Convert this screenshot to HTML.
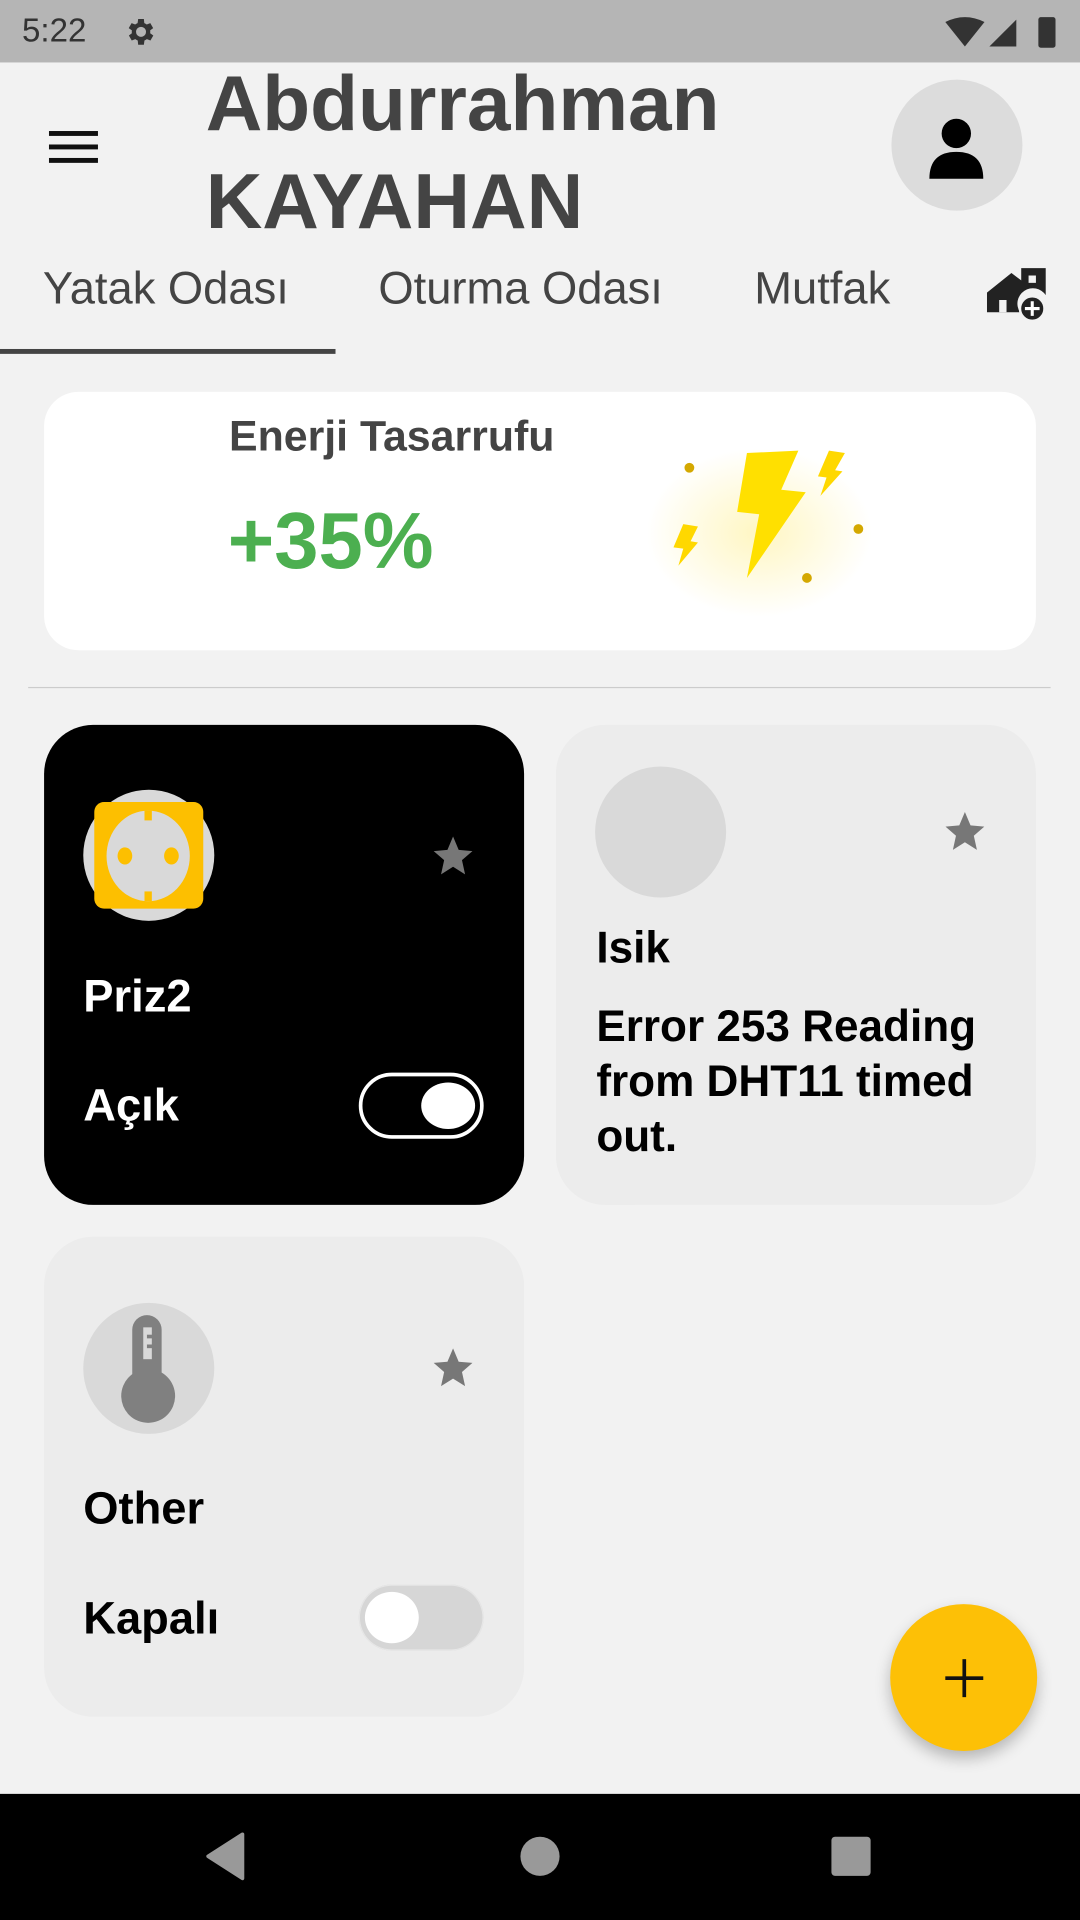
<!DOCTYPE html>
<html><head><meta charset="utf-8">
<style>
html,body{margin:0;padding:0;width:1080px;height:1920px;overflow:hidden;background:#f2f2f2;}
#w{position:absolute;left:0;top:0;width:882px;height:1568px;transform:scale(1.22449);transform-origin:0 0;font-family:"Liberation Sans",Roboto,sans-serif;}
.a{position:absolute;}
.t{position:absolute;white-space:nowrap;line-height:1;}
.b{font-weight:bold;}
</style></head><body><div id="w">
<div class="a" style="left:0;top:0;width:882px;height:51px;background:#b5b5b5"></div>
<div class="t" style="left:18px;top:12px;font-size:27px;color:#333">5:22</div>
<svg class="a" style="left:100px;top:12px" width="28" height="28" viewBox="0 0 24 24"><path fill="#333" d="M19.4 13a7.5 7.5 0 000-2l2.1-1.6-2-3.5-2.5 1a7 7 0 00-1.7-1L15 3h-4l-.4 2.9a7 7 0 00-1.7 1l-2.5-1-2 3.5L6.6 11a7.5 7.5 0 000 2l-2.1 1.6 2 3.5 2.5-1a7 7 0 001.7 1L11 21h4l.4-2.9a7 7 0 001.7-1l2.5 1 2-3.5zM13 15.5a3.5 3.5 0 110-7 3.5 3.5 0 010 7z"/></svg>
<svg class="a" style="left:770px;top:12px" width="100" height="28" viewBox="0 0 100 28"><path fill="#333" d="M2 6 Q18 -2 34 6 L18 26Z"/><path fill="#333" d="M38 26 L60 4 V26Z"/><rect x="78" y="2" width="14" height="25" rx="2" fill="#333"/></svg>

<div class="a" style="left:40px;top:107px;width:40px;height:4px;background:#111"></div>
<div class="a" style="left:40px;top:118px;width:40px;height:4px;background:#111"></div>
<div class="a" style="left:40px;top:129px;width:40px;height:4px;background:#111"></div>
<div class="t b" style="left:168px;top:44px;font-size:64px;color:#444;line-height:80px">Abdurrahman<br>KAYAHAN</div>
<div class="a" style="left:728px;top:65px;width:107px;height:107px;border-radius:50%;background:#dcdcdc"></div>
<svg class="a" style="left:756px;top:94px" width="50" height="54" viewBox="0 0 50 54"><circle cx="25" cy="15" r="12" fill="#000"/><path d="M3 52 Q3 30 25 30 Q47 30 47 52Z" fill="#000"/></svg>

<div class="t" style="left:35px;top:217px;font-size:37px;color:#444">Yatak Odası</div>
<div class="t" style="left:309px;top:217px;font-size:37px;color:#444">Oturma Odası</div>
<div class="t" style="left:616px;top:217px;font-size:37px;color:#444">Mutfak</div>
<svg class="a" style="left:806px;top:217px" width="50" height="46" viewBox="0 0 50 46"><path fill="#222" d="M0 22 L20 6 L28 12 V2 H48 V24 A12 12 0 0 0 27 38 H0Z"/><rect x="34" y="8" width="6" height="6" fill="#f2f2f2"/><circle cx="37" cy="35" r="10" fill="#222" stroke="#f2f2f2" stroke-width="2"/><path d="M37 29v12M31 35h12" stroke="#fff" stroke-width="2.5"/><rect x="10" y="28" width="6" height="10" fill="#f2f2f2"/></svg>
<div class="a" style="left:0;top:285px;width:274px;height:4px;background:#444"></div>

<div class="a" style="left:36px;top:320px;width:810px;height:211px;border-radius:28px;background:#fff"></div>
<div class="t b" style="left:187px;top:339px;font-size:35px;color:#444">Enerji Tasarrufu</div>
<div class="t b" style="left:186px;top:409px;font-size:65px;color:#4caf50">+35%</div>
<div class="a" style="left:520px;top:360px;width:200px;height:150px;border-radius:50%;background:radial-gradient(ellipse,rgba(255,230,80,.35),rgba(255,255,255,0) 65%)"></div>
<svg class="a" style="left:540px;top:360px" width="180" height="120" viewBox="0 0 180 120"><path fill="#ffe000" d="M70 10 L112 8 L98 40 L118 42 L70 112 L80 60 L62 58Z"/><path fill="#ffd800" d="M137 8 L150 10 L142 24 L148 25 L130 45 L135 30 L128 29Z"/><path fill="#ffd800" d="M18 68 L30 70 L24 82 L30 83 L14 102 L18 88 L10 87Z"/><circle cx="23" cy="22" r="4" fill="#d4a800"/><circle cx="161" cy="72" r="4" fill="#d4a800"/><circle cx="119" cy="112" r="4" fill="#d4a800"/></svg>
<div class="a" style="left:23px;top:561px;width:835px;height:1px;background:#ccc"></div>

<!-- card1 -->
<div class="a" style="left:36px;top:592px;width:392px;height:392px;border-radius:40px;background:#000"></div>
<div class="a" style="left:68px;top:645px;width:107px;height:107px;border-radius:50%;background:#d9d9d9"></div>
<div class="a" style="left:77px;top:655px;width:89px;height:87px;border-radius:8px;background:#fdbf00"></div>
<div class="a" style="left:87px;top:662px;width:68px;height:74px;border-radius:50%;background:#d9d9d9"></div>
<div class="a" style="left:118px;top:662px;width:6px;height:8px;background:#fdbf00"></div>
<div class="a" style="left:118px;top:728px;width:6px;height:8px;background:#fdbf00"></div>
<div class="a" style="left:96px;top:692px;width:12px;height:14px;border-radius:50%;background:#fdbf00"></div>
<div class="a" style="left:134px;top:692px;width:12px;height:14px;border-radius:50%;background:#fdbf00"></div>
<svg class="a" style="left:350px;top:680px" width="40" height="38" viewBox="0 0 24 24"><path fill="#777" d="M12 2l2.9 6.9 7.1.6-5.4 4.7 1.6 7.3L12 17.6 5.8 21.5l1.6-7.3L2 9.5l7.1-.6z"/></svg>
<div class="t b" style="left:68px;top:795px;font-size:37px;color:#fff">Priz2</div>
<div class="t b" style="left:68px;top:884px;font-size:37px;color:#fff">Açık</div>
<div class="a" style="left:293px;top:876px;border:3px solid #fff;border-radius:28px;width:96px;height:48px"></div>
<div class="a" style="left:344px;top:884px;width:44px;height:38px;border-radius:50%;background:#fff"></div>

<!-- card2 -->
<div class="a" style="left:454px;top:592px;width:392px;height:392px;border-radius:40px;background:#ececec"></div>
<div class="a" style="left:486px;top:626px;width:107px;height:107px;border-radius:50%;background:#d9d9d9"></div>
<svg class="a" style="left:768px;top:660px" width="40" height="38" viewBox="0 0 24 24"><path fill="#777" d="M12 2l2.9 6.9 7.1.6-5.4 4.7 1.6 7.3L12 17.6 5.8 21.5l1.6-7.3L2 9.5l7.1-.6z"/></svg>
<div class="t b" style="left:487px;top:756px;font-size:36px;color:#000">Isik</div>
<div class="t b" style="left:487px;top:815px;font-size:36px;color:#000;line-height:45px">Error 253 Reading<br>from DHT11 timed<br>out.</div>

<!-- card3 -->
<div class="a" style="left:36px;top:1010px;width:392px;height:392px;border-radius:40px;background:#ececec"></div>
<div class="a" style="left:68px;top:1064px;width:107px;height:107px;border-radius:50%;background:#d9d9d9"></div>
<svg class="a" style="left:96px;top:1072px" width="52" height="92" viewBox="0 0 52 92"><rect x="12" y="2" width="24" height="60" rx="12" fill="#808080"/><ellipse cx="25" cy="68" rx="22" ry="22" fill="#808080"/><rect x="21" y="12" width="7" height="26" fill="#d9d9d9"/><rect x="24" y="18" width="5" height="3" fill="#808080"/><rect x="24" y="26" width="5" height="3" fill="#808080"/></svg>
<svg class="a" style="left:350px;top:1098px" width="40" height="38" viewBox="0 0 24 24"><path fill="#777" d="M12 2l2.9 6.9 7.1.6-5.4 4.7 1.6 7.3L12 17.6 5.8 21.5l1.6-7.3L2 9.5l7.1-.6z"/></svg>
<div class="t b" style="left:68px;top:1213px;font-size:37px;color:#000">Other</div>
<div class="t b" style="left:68px;top:1303px;font-size:37px;color:#000">Kapalı</div>
<div class="a" style="left:293px;top:1294px;width:102px;height:54px;border-radius:27px;background:#d6d6d6;box-shadow:inset 0 0 0 1px #e6e6e6"></div>
<div class="a" style="left:298px;top:1300px;width:44px;height:42px;border-radius:50%;background:#fff"></div>

<!-- FAB -->
<div class="a" style="left:727px;top:1310px;width:120px;height:120px;border-radius:50%;background:#fdc006;box-shadow:0 6px 12px rgba(0,0,0,.25)"></div>
<div class="a" style="left:772px;top:1369px;width:31px;height:3px;background:#111"></div>
<div class="a" style="left:786px;top:1355px;width:3px;height:31px;background:#111"></div>

<!-- nav -->
<div class="a" style="left:0;top:1465px;width:882px;height:103px;background:#000"></div>
<svg class="a" style="left:166px;top:1496px" width="36" height="40" viewBox="0 0 36 40"><path d="M32 2 L4 20 L32 38Z" fill="#999" stroke="#999" stroke-width="3" stroke-linejoin="round"/></svg>
<div class="a" style="left:425px;top:1500px;width:32px;height:32px;border-radius:50%;background:#999"></div>
<div class="a" style="left:679px;top:1500px;width:32px;height:32px;border-radius:3px;background:#999"></div>
</div></body></html>
